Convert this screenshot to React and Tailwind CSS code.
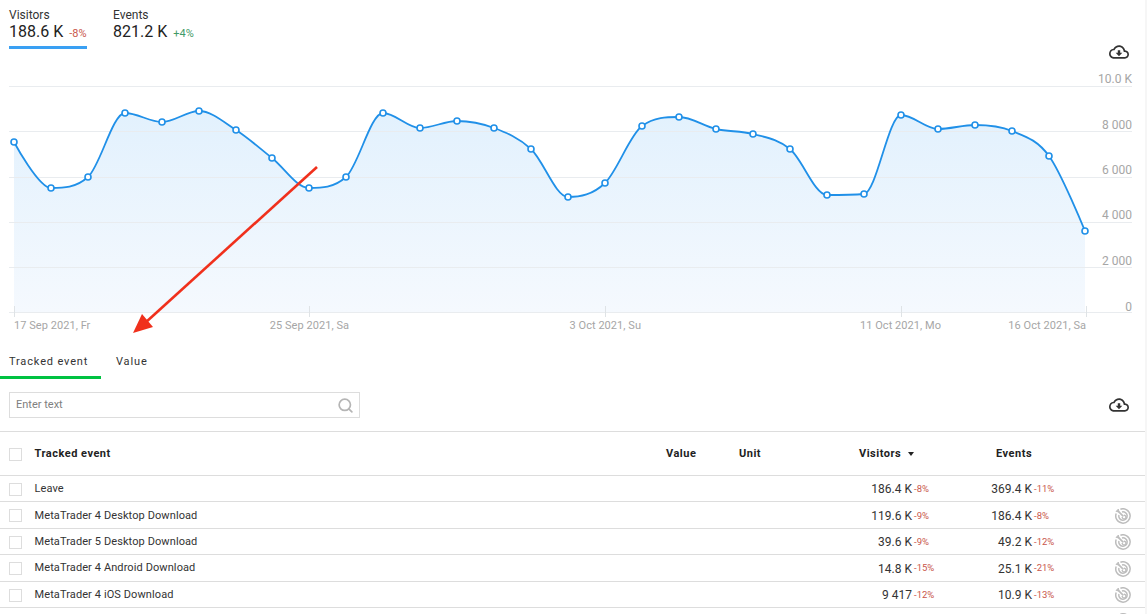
import { Search } from "lucide-react"

const points = [
  [14, 142], [51, 188], [88, 177], [125, 113], [162, 122], [199, 111], [236, 130], [272, 158], [309, 188], [346, 177],
  [383, 113], [420, 128], [457, 121], [494, 128], [531, 149], [568, 197], [605, 183], [642, 126], [679, 117], [716, 129],
  [753, 134], [790, 149], [827, 195], [864, 194], [901, 115], [938, 129], [975, 125], [1012, 131], [1049, 156], [1085, 231],
]

const gridLines = [
  [86, 83, "10.0 K"], [131, 129, "8 000"], [177, 174, "6 000"], [222, 219, "4 000"], [267, 265, "2 000"], [312, 311, "0"],
]

const dateLabels = [
  [14, "start", "17 Sep 2021, Fr"],
  [349, "end", "25 Sep 2021, Sa"],
  [641, "end", "3 Oct 2021, Su"],
  [941, "end", "11 Oct 2021, Mo"],
  [1086, "end", "16 Oct 2021, Sa"],
]

const rows = [
  { name: "Leave", visitors: "186.4 K", visitorsDelta: "-8%", events: "369.4 K", eventsDelta: "-11%", goal: false },
  { name: "MetaTrader 4 Desktop Download", visitors: "119.6 K", visitorsDelta: "-9%", events: "186.4 K", eventsDelta: "-8%", goal: true },
  { name: "MetaTrader 5 Desktop Download", visitors: "39.6 K", visitorsDelta: "-9%", events: "49.2 K", eventsDelta: "-12%", goal: true },
  { name: "MetaTrader 4 Android Download", visitors: "14.8 K", visitorsDelta: "-15%", events: "25.1 K", eventsDelta: "-21%", goal: true },
  { name: "MetaTrader 4 iOS Download", visitors: "9 417", visitorsDelta: "-12%", events: "10.9 K", eventsDelta: "-13%", goal: true },
]

// same idea as a Highcharts spline, keeps the flat tops at the extremes
function splinePath(pts) {
  const s = 2
  const conts = pts.map(([x, y], i) => {
    if (i === 0 || i === pts.length - 1) return { lx: x, ly: y, rx: x, ry: y }
    const [px, py] = pts[i - 1]
    const [nx, ny] = pts[i + 1]
    const lx = (s * x + px) / (s + 1)
    let ly = (s * y + py) / (s + 1)
    const rx = (s * x + nx) / (s + 1)
    let ry = (s * y + ny) / (s + 1)
    const c = ((ry - ly) * (rx - x)) / (rx - lx) + y - ry
    ly += c
    ry += c
    if (ly > py && ly > y) {
      ly = Math.max(py, y)
      ry = 2 * y - ly
    } else if (ly < py && ly < y) {
      ly = Math.min(py, y)
      ry = 2 * y - ly
    }
    if (ry > ny && ry > y) {
      ry = Math.max(ny, y)
      ly = 2 * y - ry
    } else if (ry < ny && ry < y) {
      ry = Math.min(ny, y)
      ly = 2 * y - ry
    }
    return { lx, ly, rx, ry }
  })
  let d = `M ${pts[0][0]} ${pts[0][1]}`
  for (let i = 1; i < pts.length; i++) {
    d += ` C ${conts[i - 1].rx} ${conts[i - 1].ry} ${conts[i].lx} ${conts[i].ly} ${pts[i][0]} ${pts[i][1]}`
  }
  return d
}

function CloudIcon() {
  return (
    <svg viewBox="0 0 24 24" className="w-[20px] h-[20px] fill-[#333333]">
      <path d="M19.35 10.04C18.67 6.59 15.64 4 12 4 9.11 4 6.6 5.64 5.35 8.04 2.34 8.36 0 10.91 0 14c0 3.31 2.69 6 6 6h13c2.76 0 5-2.24 5-5 0-2.64-2.05-4.78-4.65-4.96zM19 18H6c-2.21 0-4-1.79-4-4 0-2.05 1.53-3.76 3.56-3.97l1.07-.11.5-.95C8.08 7.14 9.94 6 12 6c2.62 0 4.88 1.86 5.39 4.43l.3 1.5 1.53.11c1.56.1 2.78 1.41 2.78 2.96 0 1.65-1.35 3-3 3zm-5.55-8h-2.9v3H8l4 4 4-4h-2.55z" />
    </svg>
  )
}

function GoalIcon() {
  return (
    <svg viewBox="0 0 16 16" className="w-[16px] h-[16px]" fill="none" stroke="#bdbdbd">
      <path d="M5.4 1.2A7.2 7.2 0 1 1 1.2 5.4" strokeWidth="1.5" />
      <path d="M7 3.9A4.2 4.2 0 1 1 3.9 7" strokeWidth="1.5" />
      <path d="M9 7.2A1.9 1.9 0 1 1 7.2 9" strokeWidth="1.4" />
      <path d="M8.4 8.4L2.8 2.8" strokeWidth="1.7" />
      <path d="M1 3.4L3.4 1L4 4Z" fill="#bdbdbd" strokeWidth="0.8" />
    </svg>
  )
}

function Checkbox() {
  return <div className="w-[13px] h-[13px] border border-[#dddddd] bg-white" />
}

function Chart() {
  const line = splinePath(points)
  const area = `${line} L 1085 312 L 14 312 Z`
  return (
    <svg viewBox="0 62 1145 283" className="w-[1145px] h-[283px] block">
      <defs>
        <linearGradient id="areaFill" x1="0" y1="0" x2="0" y2="1">
          <stop offset="0" stopColor="#e2f1fd" />
          <stop offset="1" stopColor="#f5f9fe" />
        </linearGradient>
      </defs>
      <path d={area} fill="url(#areaFill)" />
      {gridLines.map(([y, textY, label]) => (
        <g key={label}>
          <line x1="9" x2="1132" y1={y + 0.5} y2={y + 0.5} stroke="#e9ecef" />
          <text x="1132" y={textY} textAnchor="end" fontSize="12" fill="#a6a6a6">{label}</text>
        </g>
      ))}
      {[14, 309, 605, 901, 1086].map((x) => (
        <line key={x} x1={x + 0.5} x2={x + 0.5} y1="306" y2="317" stroke="#dfe3e6" />
      ))}
      {dateLabels.map(([x, anchor, label]) => (
        <text key={label} x={x} y="329" textAnchor={anchor} fontSize="11" fill="#a6a6a6" letterSpacing="0.05">{label}</text>
      ))}
      <path d={line} fill="none" stroke="#2090e8" strokeWidth="1.8" />
      {points.map(([x, y]) => (
        <circle key={x} cx={x} cy={y} r="3" fill="#ffffff" stroke="#2090e8" strokeWidth="1.6" />
      ))}
    </svg>
  )
}

function Metric({ label, value, delta, deltaClass, active }) {
  return (
    <div className={`h-[49px] pt-[9px] ${active ? "border-b-[3px] border-[#3aa0f3]" : ""}`}>
      <div className="text-[12px] leading-[13px] text-[#333333]">{label}</div>
      <div className="flex items-baseline gap-[6px] whitespace-nowrap">
        <span className="text-[16px] leading-[20px] text-[#222222]">{value}</span>
        <span className={`text-[11px] ${deltaClass}`}>{delta}</span>
      </div>
    </div>
  )
}

export default function App() {
  return (
    <div className="relative flex h-[614px] overflow-hidden bg-[#f6f6f6] font-['Roboto',sans-serif]">
      <div className="w-[1145px] shrink-0 bg-white">
        {/* Metrics */}
        <div className="flex h-[62px] pl-[9px] pr-[16px]">
          <div className="w-[104px]">
            <div className="w-[78px]">
              <Metric label="Visitors" value="188.6 K" delta="-8%" deltaClass="text-[#c9564b]" active />
            </div>
          </div>
          <Metric label="Events" value="821.2 K" delta="+4%" deltaClass="text-[#3f9a68]" />
          <div className="ml-auto pt-[42px]">
            <CloudIcon />
          </div>
        </div>

        <Chart />

        {/* Tabs */}
        <div className="flex h-[34px] text-[11px] tracking-[0.85px] text-[#333333]">
          <div className="w-[101px] h-[34px] pl-[9px] pt-[9px] border-b-[3px] border-[#00c241]">Tracked event</div>
          <div className="pl-[15px] pt-[9px]">Value</div>
        </div>

        {/* Search */}
        <div className="flex items-start justify-between h-[53px] pt-[13px] pl-[9px] pr-[16px] border-b border-[#dddddd]">
          <div className="flex items-center justify-between w-[351px] h-[26px] pt-[1px] pl-[6px] pr-[5px] border border-[#dddddd]">
            <span className="text-[11px] text-[#808080]">Enter text</span>
            <Search className="w-[17px] h-[17px] text-[#b5b5b5]" strokeWidth={2.4} />
          </div>
          <div className="mt-[3px]">
            <CloudIcon />
          </div>
        </div>

        {/* Table header */}
        <div className="flex items-center h-[44px] pt-[1px] border-b border-[#dddddd] text-[11px] font-bold tracking-[0.5px] text-[#222222]">
          <div className="w-[34px] pl-[9px]"><Checkbox /></div>
          <div className="w-[632px] pl-[0.5px]">Tracked event</div>
          <div className="w-[73px]">Value</div>
          <div className="w-[120px]">Unit</div>
          <div className="w-[137px] flex items-center gap-[7px]">
            Visitors
            <span className="w-0 h-0 border-x-[3px] border-x-transparent border-t-[4px] border-t-[#222222]" />
          </div>
          <div>Events</div>
        </div>

        {/* Rows */}
        {rows.map((row) => (
          <div key={row.name} className="flex items-center h-[26.4px] pt-[1.5px] border-b border-[#dddddd] text-[11px] text-[#333333]">
            <div className="w-[34px] pl-[9px]"><Checkbox /></div>
            <div className="w-[825px] pl-[0.5px] tracking-[0.1px]">{row.name}</div>
            <div className="w-[53px] text-right text-[12px] whitespace-nowrap">{row.visitors}</div>
            <div className="w-[60px] pl-[2px] text-[9.5px] text-[#c9564b]">{row.visitorsDelta}</div>
            <div className="w-[60px] text-right text-[12px] whitespace-nowrap">{row.events}</div>
            <div className="w-[83px] pl-[2px] text-[9.5px] text-[#c9564b]">{row.eventsDelta}</div>
            {row.goal && <GoalIcon />}
          </div>
        ))}
        <div className="flex items-start justify-end h-[26px] pt-[5px] pr-[14px]">
          <GoalIcon />
        </div>
      </div>
      <div className="flex-1" />

      {/* Annotation arrow drawn over the page */}
      <svg className="absolute left-0 top-0 w-[1147px] h-[614px] pointer-events-none" viewBox="0 0 1147 614">
        <line x1="317" y1="167" x2="145" y2="323" stroke="#f0301c" strokeWidth="2.6" />
        <path d="M133 333L142 314L153 327Z" fill="#f0301c" />
      </svg>
    </div>
  )
}
